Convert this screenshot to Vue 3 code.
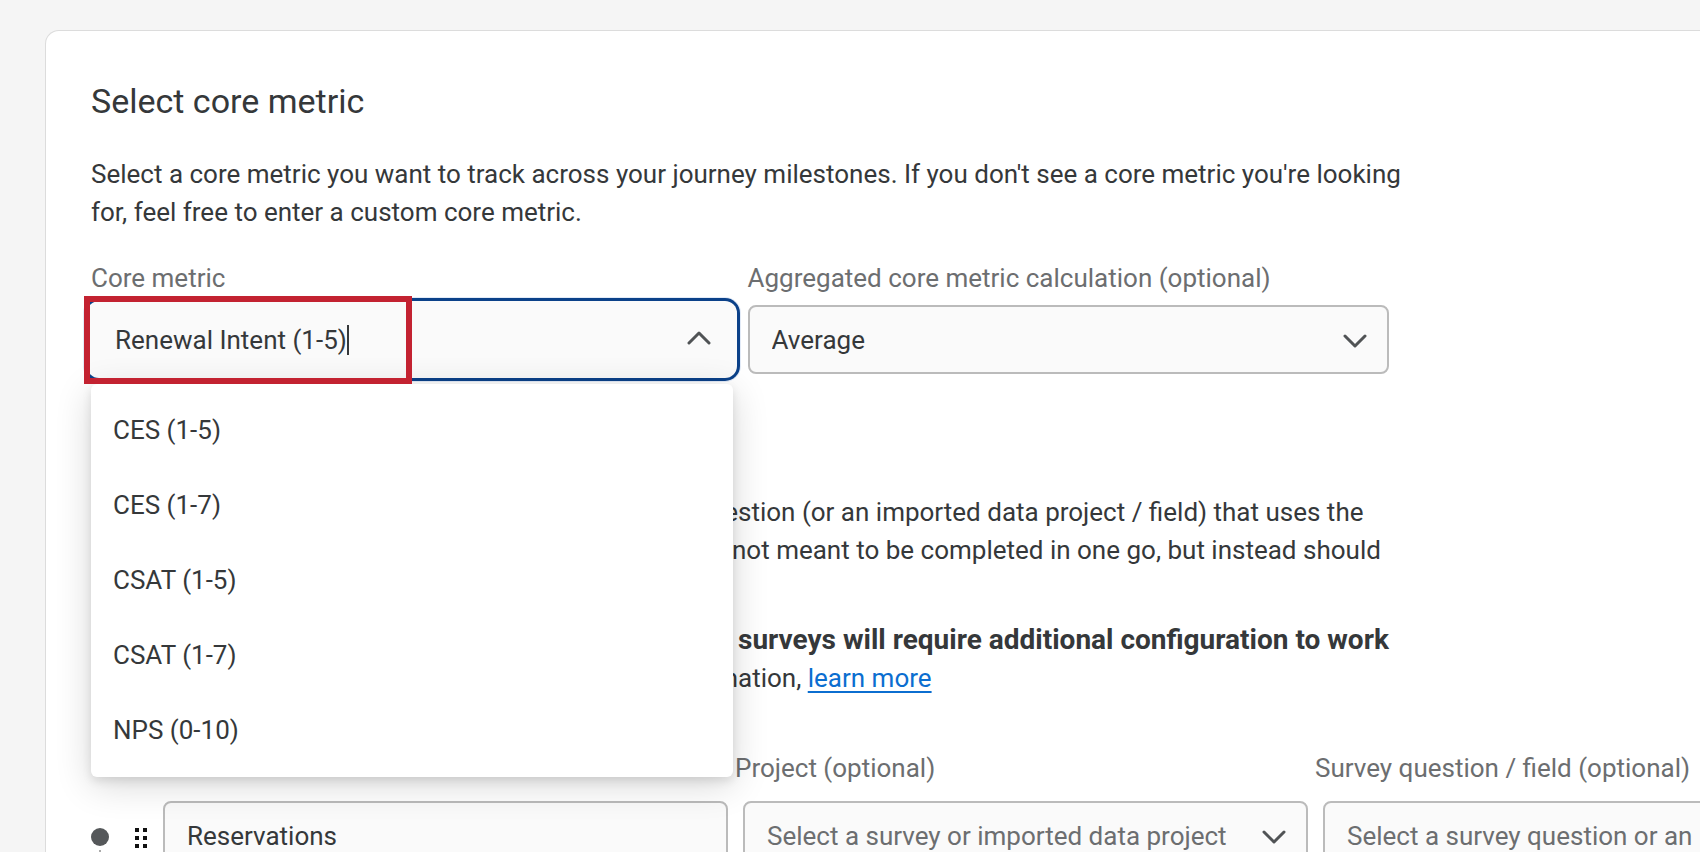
<script setup>
import { ref } from 'vue'

const coreMetric = ref('Renewal Intent (1-5)')
const aggregation = ref('Average')
const milestone = ref('Reservations')
const project = ref('')
const question = ref('')
const metrics = ['CES (1-5)', 'CES (1-7)', 'CSAT (1-5)', 'CSAT (1-7)', 'NPS (0-10)']
</script>

<template>
  <main class="page">
    <section class="card">
      <h2 class="title">Select core metric</h2>
      <p class="intro">
        Select a core metric you want to track across your journey milestones. If you don't see a core metric you're looking<br />
        for, feel free to enter a custom core metric.
      </p>

      <div class="metric-row">
        <div class="field">
          <label class="label" for="core-metric">Core metric</label>
          <div class="combo">
            <input id="core-metric" v-model="coreMetric" class="combo-input" type="text" role="combobox" aria-expanded="true" aria-controls="metric-list" />
            <span class="caret"></span>
            <svg class="chevron up" viewBox="0 0 24 14" aria-hidden="true"><path d="M2 12 12 2 22 12" /></svg>
            <ul id="metric-list" class="menu" role="listbox">
              <li v-for="m in metrics" :key="m" class="option" role="option">{{ m }}</li>
            </ul>
            <div class="highlight"></div>
          </div>
        </div>
        <div class="field">
          <label class="label" for="aggregation">Aggregated core metric calculation (optional)</label>
          <div class="select-wrap">
            <select id="aggregation" v-model="aggregation" class="control">
              <option>Average</option>
            </select>
            <svg class="chevron" viewBox="0 0 24 14" aria-hidden="true"><path d="M2 2 12 12 22 2" /></svg>
          </div>
        </div>
      </div>

      <div class="notes">
        <p class="note">
          <span class="line"><span class="lead">For each milestone, select a survey que</span>stion (or an imported data project / field) that uses the</span>
          <span class="line"><span class="lead short">core metric you selected. This is </span>not meant to be completed in one go, but instead should</span>
        </p>
        <p class="note">
          <strong class="line"><span class="lead">Please note that existing </span>surveys will require additional configuration to work</strong>
          <span class="line"><span class="lead">with journeys. For more inform</span>ation,&nbsp;<a href="#learn-more">learn more</a></span>
        </p>
      </div>

      <div class="milestones">
        <div class="handle">
          <div class="rail">
            <span class="node"></span>
            <span class="stem"></span>
          </div>
          <svg class="grip" viewBox="0 0 12 20" aria-hidden="true">
            <path d="M0 0h4v4H0zM8 0h4v4H8zM0 8h4v4H0zM8 8h4v4H8zM0 16h4v4H0zM8 16h4v4H8z" />
          </svg>
        </div>
        <div class="field">
          <label class="label outdent" for="milestone">Milestone name</label>
          <input id="milestone" v-model="milestone" class="control" type="text" />
        </div>
        <div class="field">
          <label class="label outdent" for="project">Project (optional)</label>
          <div class="select-wrap">
            <select id="project" v-model="project" class="control empty">
              <option value="">Select a survey or imported data project</option>
            </select>
            <svg class="chevron" viewBox="0 0 24 14" aria-hidden="true"><path d="M2 2 12 12 22 2" /></svg>
          </div>
        </div>
        <div class="field">
          <label class="label outdent" for="question">Survey question / field (optional)</label>
          <div class="select-wrap">
            <select id="question" v-model="question" class="control empty">
              <option value="">Select a survey question or an imported field</option>
            </select>
          </div>
        </div>
      </div>
    </section>
  </main>
</template>

<style>
html,
body {
  background: #f5f5f5;
}
</style>

<style scoped>
* {
  box-sizing: border-box;
}
.page {
  height: 100vh;
  overflow: hidden;
  padding: 30px 0 0 45px;
  background: #f5f5f5;
  color: #35383a;
  font-family: Roboto, "Liberation Sans", sans-serif;
  font-size: 26px;
  line-height: 38px;
}
.card {
  min-height: 100%;
  padding: 45px;
  border: 1px solid #dcdcdc;
  border-right: 0;
  border-radius: 14px 0 0 0;
  background: #fff;
}
.title {
  margin: 0;
  font-size: 34px;
  line-height: 50px;
  font-weight: 400;
}
.intro {
  margin: 29px 0 0;
  white-space: nowrap;
}
.metric-row {
  display: grid;
  grid-template-columns: 1fr 1fr;
  gap: 15px;
  width: 83%;
  margin-top: 28px;
}
.field {
  min-width: 0;
}
.label {
  display: block;
  margin-bottom: 8px;
  color: #6c6e70;
  white-space: nowrap;
}
.combo {
  position: relative;
  display: flex;
  align-items: center;
  height: 69px;
  padding-left: 24px;
  border-radius: 8px;
  background: #fafafa;
  box-shadow: 0 0 0 4px #fafafa, 0 0 0 7px #0b4189, 0 0 0 8px #e3ebf7;
}
.combo-input {
  field-sizing: content;
  padding: 0;
  border: 0;
  outline: 0;
  background: transparent;
  color: inherit;
  font: inherit;
}
.caret {
  width: 2px;
  height: 30px;
  background: #35383a;
}
.chevron {
  position: absolute;
  top: 29px;
  right: 22px;
  width: 24px;
  height: 14px;
  fill: none;
  stroke: #505355;
  stroke-width: 3;
  stroke-linecap: round;
  stroke-linejoin: round;
  pointer-events: none;
}
.up {
  top: 26px;
}
.menu {
  position: absolute;
  z-index: 2;
  top: 79px;
  left: 0;
  right: 0;
  margin: 0;
  padding: 9px 0;
  border-radius: 6px;
  background: #fff;
  box-shadow: 0 8px 36px rgba(0, 0, 0, 0.16), 0 4px 10px rgba(0, 0, 0, 0.1);
  list-style: none;
}
.option {
  padding: 0 22px;
  line-height: 75px;
}
.highlight {
  position: absolute;
  z-index: 3;
  top: -9px;
  left: -7px;
  width: 328px;
  height: 88px;
  border: 6px solid #c32231;
  pointer-events: none;
}
.select-wrap {
  position: relative;
}
.control {
  display: block;
  appearance: none;
  width: 100%;
  height: 69px;
  padding: 0 22px;
  border: 2px solid #bbb;
  border-radius: 8px;
  background: #fafafa;
  color: inherit;
  font: inherit;
}
.empty {
  color: #6c6e70;
}
.notes {
  margin-top: 119px;
}
.note {
  margin: 0 0 52px;
}
.line {
  display: block;
  height: 38px;
  white-space: nowrap;
}
strong.line {
  font-size: 28px;
}
.lead {
  display: inline-block;
  width: 647px;
  text-align: right;
  white-space: pre;
}
.short {
  width: 641px;
}
.note a {
  color: #0b6ed0;
  text-decoration-thickness: 2px;
  text-underline-offset: 4px;
}
.milestones {
  display: grid;
  grid-template-columns: 57px repeat(3, minmax(565px, 1fr));
  column-gap: 15px;
}
.milestones .label {
  margin-bottom: 14px;
}
.handle {
  display: flex;
  gap: 26px;
  padding-top: 79px;
}
.rail {
  display: flex;
  flex-direction: column;
  align-items: center;
}
.node {
  width: 18px;
  height: 18px;
  border-radius: 50%;
  background: #55585a;
}
.stem {
  flex: 1;
  width: 2px;
  margin-top: 4px;
  background: #aaa;
}
.grip {
  width: 12px;
  height: 20px;
  fill: #111;
}
.outdent {
  margin-left: -8px;
}
</style>
